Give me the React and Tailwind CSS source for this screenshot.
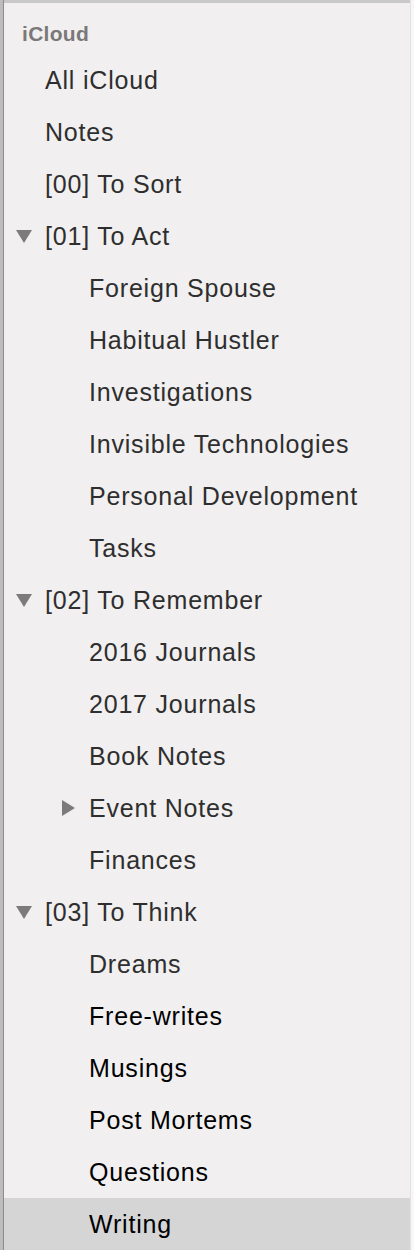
const items = [
  { label: "All iCloud", level: 0 },
  { label: "Notes", level: 0 },
  { label: "[00] To Sort", level: 0 },
  { label: "[01] To Act", level: 0, open: true },
  { label: "Foreign Spouse", level: 1 },
  { label: "Habitual Hustler", level: 1 },
  { label: "Investigations", level: 1 },
  { label: "Invisible Technologies", level: 1 },
  { label: "Personal Development", level: 1 },
  { label: "Tasks", level: 1 },
  { label: "[02] To Remember", level: 0, open: true },
  { label: "2016 Journals", level: 1 },
  { label: "2017 Journals", level: 1 },
  { label: "Book Notes", level: 1 },
  { label: "Event Notes", level: 1, closed: true },
  { label: "Finances", level: 1 },
  { label: "[03] To Think", level: 0, open: true },
  { label: "Dreams", level: 1 },
  { label: "Free-writes", level: 1, dark: true },
  { label: "Musings", level: 1, dark: true },
  { label: "Post Mortems", level: 1, dark: true },
  { label: "Questions", level: 1, dark: true },
  { label: "Writing", level: 1, dark: true, selected: true },
];

function Down() {
  return (
    <svg width="16" height="13" viewBox="0 0 16 13">
      <path d="M0 0 H16 L8 13 Z" fill="#7b7b7b" />
    </svg>
  );
}

function Right() {
  return (
    <svg width="13" height="16" viewBox="0 0 13 16">
      <path d="M0 0 V16 L13 8 Z" fill="#7b7b7b" />
    </svg>
  );
}

function Row({ item }) {
  const pad = item.level === 0 ? "pl-[41px]" : "pl-[85px]";
  return (
    <div
      className={`relative h-[52px] flex items-center ${pad} ${
        item.selected ? "bg-[#d5d5d5]" : ""
      }`}
    >
      {item.open && (
        <span className="absolute left-[12px] top-[20px] flex">
          <Down />
        </span>
      )}
      {item.closed && (
        <span className="absolute left-[58px] top-[18px] flex">
          <Right />
        </span>
      )}
      <span
        className={`text-[25px] leading-none tracking-[0.8px] ${
          item.dark ? "text-[#000]" : "text-[#2e2e2e]"
        }`}
      >
        {item.label}
      </span>
    </div>
  );
}

export default function App() {
  return (
    <div
      className="w-[414px] h-[1250px] flex bg-[#f1efef] overflow-hidden"
      style={{ fontFamily: '"Liberation Sans", Arial, sans-serif' }}
    >
      <div className="w-[3px] bg-[#bdbdbd] shrink-0" />
      <div className="w-[1px] bg-[#8c8c8c] shrink-0" />
      <div className="flex-1 flex flex-col">
        <div className="h-[3px] bg-[#c9c9c9]" />
        <div className="flex-1 flex flex-col">
          <div className="h-[51px] pl-[18px] flex items-center pt-[10px]">
            <span className="text-[21px] font-semibold tracking-[0.3px] text-[#7a7878]">iCloud</span>
          </div>
          {items.map((it) => (
            <Row key={it.label} item={it} />
          ))}
        </div>
      </div>
      <div className="w-[1px] bg-[#e2e2e2] shrink-0" />
      <div className="w-[3px] bg-[#f7f7f7] shrink-0" />
    </div>
  );
}
